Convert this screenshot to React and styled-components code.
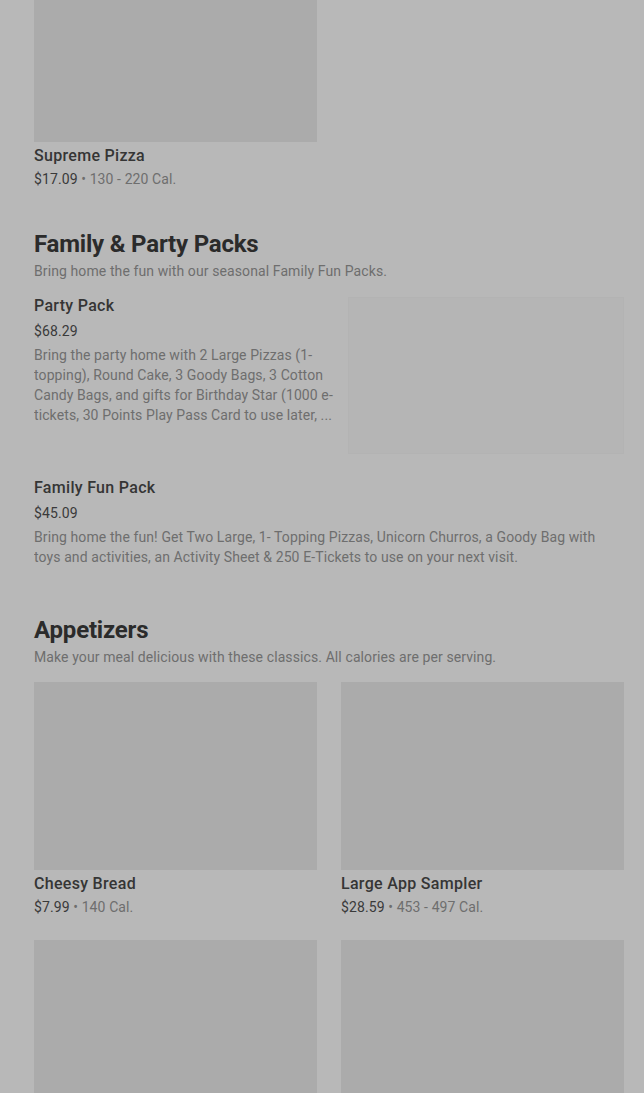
import styled, { createGlobalStyle } from 'styled-components';

const GlobalStyle = createGlobalStyle`
  html, body {
    margin: 0;
    padding: 0;
    background: #b8b8b8;
  }
  body {
    font-family: Roboto, "Liberation Sans", Arial, sans-serif;
    -webkit-font-smoothing: antialiased;
  }
`;

const Page = styled.main`
  margin-top: -46px;
  padding: 0 20px 0 34px;
  overflow: hidden;
`;

const Grid = styled.div`
  display: grid;
  grid-template-columns: 283px 283px;
  column-gap: 24px;
  row-gap: 23px;
`;

const Card = styled.div`
  display: flex;
  flex-direction: column;
`;

const Photo = styled.div`
  height: ${(p) => p.$h || 188}px;
  background: ${(p) => (p.$light ? '#b5b5b5' : '#ababab')};
  border: ${(p) => (p.$light ? '1px solid #b3b3b3' : 'none')};
  box-sizing: border-box;
`;

const ItemTitle = styled.h3`
  margin: ${(p) => p.$top || 0}px 0 0;
  font-size: 16px;
  font-weight: 500;
  line-height: 24px;
  color: #353535;
  letter-spacing: 0.3px;
`;

const Meta = styled.div`
  margin-top: 1px;
  font-size: 14px;
  line-height: 20px;
  color: #6e6e6e;
  letter-spacing: 0.1px;
`;

const Price = styled.span`
  color: #3a3a3a;
`;

const Section = styled.section`
  margin-top: ${(p) => p.$top}px;
`;

const Heading = styled.h2`
  margin: 0;
  font-size: 24px;
  font-weight: 700;
  line-height: 32px;
  color: #2b2b2b;
  letter-spacing: -0.2px;
`;

const Subtitle = styled.p`
  margin: 1px 0 0;
  font-size: 14px;
  line-height: 20px;
  color: #6e6e6e;
  letter-spacing: 0.1px;
`;

const List = styled.div`
  display: flex;
  flex-direction: column;
  gap: 22px;
  margin-top: 13px;
`;

const Row = styled.div`
  display: flex;
  gap: 8px;
  align-items: flex-start;
`;

const RowText = styled.div`
  flex: 1;
  min-width: 0;
`;

const RowPhoto = styled(Photo)`
  flex: 0 0 276px;
  margin-top: 3px;
`;

const RowPrice = styled.div`
  margin-top: 3px;
  font-size: 14px;
  line-height: 20px;
  color: #3a3a3a;
  letter-spacing: 0.1px;
`;

const Desc = styled.p`
  margin: 4px 0 0;
  font-size: 14px;
  line-height: 20px;
  color: #6e6e6e;
  letter-spacing: 0.1px;
  display: -webkit-box;
  -webkit-box-orient: vertical;
  -webkit-line-clamp: 4;
  overflow: hidden;
`;

const GridWrap = styled.div`
  margin-top: 15px;
`;

const GridCard = ({ title, price, cal, h }) => (
  <Card>
    <Photo $h={h} />
    {title && <ItemTitle $top={2}>{title}</ItemTitle>}
    {price && (
      <Meta>
        <Price>{price}</Price> • {cal}
      </Meta>
    )}
  </Card>
);

export default function App() {
  return (
    <>
      <GlobalStyle />
      <Page>
        <Grid>
          <GridCard title="Supreme Pizza" price="$17.09" cal="130 - 220 Cal." />
        </Grid>

        <Section $top={39}>
          <Heading>Family &amp; Party Packs</Heading>
          <Subtitle>Bring home the fun with our seasonal Family Fun Packs.</Subtitle>
          <List>
            <Row>
              <RowText>
                <ItemTitle>Party Pack</ItemTitle>
                <RowPrice>$68.29</RowPrice>
                <Desc>
                  Bring the party home with 2 Large Pizzas (1-topping), Round Cake, 3 Goody Bags, 3 Cotton
                  Candy Bags, and gifts for Birthday Star (1000 e-tickets, 30 Points Play Pass Card to use later, ...
                </Desc>
              </RowText>
              <RowPhoto $h={157} $light />
            </Row>
            <Row>
              <RowText>
                <ItemTitle>Family Fun Pack</ItemTitle>
                <RowPrice>$45.09</RowPrice>
                <Desc>
                  Bring home the fun! Get Two Large, 1- Topping Pizzas, Unicorn Churros, a Goody Bag with
                  toys and activities, an Activity Sheet &amp; 250 E-Tickets to use on your next visit.
                </Desc>
              </RowText>
            </Row>
          </List>
        </Section>

        <Section $top={47}>
          <Heading>Appetizers</Heading>
          <Subtitle>Make your meal delicious with these classics. All calories are per serving.</Subtitle>
          <GridWrap>
            <Grid>
              <GridCard title="Cheesy Bread" price="$7.99" cal="140 Cal." />
              <GridCard title="Large App Sampler" price="$28.59" cal="453 - 497 Cal." />
              <GridCard />
              <GridCard />
            </Grid>
          </GridWrap>
        </Section>
      </Page>
    </>
  );
}
